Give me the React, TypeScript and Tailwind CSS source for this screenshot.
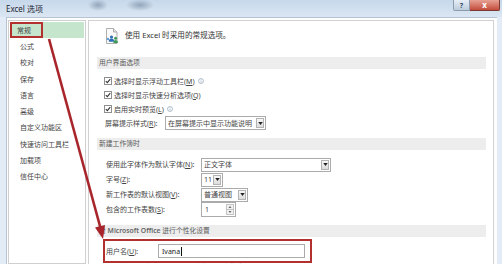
import React from "react"

type RowProps = {
  label: React.ReactNode
  labelClass: string
  children?: React.ReactNode
}

const Check = () => (
  <span className="flex h-[8px] w-[8px] shrink-0 items-center justify-center border border-[#8e8f8f] bg-white">
    <svg viewBox="0 0 8 8" className="h-[6px] w-[6px]">
      <path d="M1 4.3 L3.1 6.2 L7 1.4" fill="none" stroke="#333" strokeWidth="1.4" />
    </svg>
  </span>
)

const Info = () => (
  <svg viewBox="0 0 8 8" className="ml-[3px] h-[6px] w-[6px]">
    <circle cx="4" cy="4" r="3.3" fill="none" stroke="#8aa0b4" strokeWidth="0.9" />
    <path d="M4 3.4v2.6M4 2v0.6" stroke="#8aa0b4" strokeWidth="0.9" />
  </svg>
)

const DropBtn = () => (
  <span className="m-[1px] flex w-[8px] shrink-0 items-center justify-center border border-[#b3b3b3] bg-gradient-to-b from-[#f8f8f8] to-[#dcdcdc]">
    <svg viewBox="0 0 6 4" className="h-[3px] w-[5px]">
      <path d="M0 0h6L3 4z" fill="#222" />
    </svg>
  </span>
)

const Select = ({ text, className }: { text: string; className: string }) => (
  <div className={`flex h-[14px] border border-[#ababab] bg-white ${className}`}>
    <span className="flex flex-1 items-center overflow-hidden whitespace-nowrap pl-[2px]">{text}</span>
    <DropBtn />
  </div>
)

const Row = ({ label, labelClass, children }: RowProps) => (
  <div className="flex h-[15px] shrink-0 items-center">
    <span className={`shrink-0 whitespace-nowrap pl-[1px] ${labelClass}`}>{label}</span>
    {children}
  </div>
)

const Heading = ({ children, className }: { children: React.ReactNode; className: string }) => (
  <div className={`ml-[8px] mr-[7px] flex h-[12px] shrink-0 items-center bg-[#ededed] pl-[2px] text-[6.8px] text-[#5a5a5a] ${className}`}>
    {children}
  </div>
)

const GeneralIcon = () => (
  <svg viewBox="0 0 16 16" className="h-[16px] w-[16px]">
    <path d="M2.5 0.5h7l3.5 3.5v11.5h-10.5z" fill="#fafafa" stroke="#9a9a9a" strokeWidth="0.8" />
    <path d="M9.5 0.5v3.5h3.5" fill="#e4e4e4" stroke="#9a9a9a" strokeWidth="0.8" />
    <circle cx="7.5" cy="9" r="1.6" fill="#2f6fb5" />
    <path d="M4.8 13.8c0-2.2 1.2-3.2 2.7-3.2s2.7 1 2.7 3.2z" fill="#2f6fb5" />
    <circle cx="11.6" cy="10.2" r="1.5" fill="#3f9a5c" />
    <path d="M9.3 15c0-2 1-2.9 2.3-2.9s2.3 0.9 2.3 2.9z" fill="#3f9a5c" />
    <circle cx="4" cy="11" r="1.2" fill="#5b9bd5" />
  </svg>
)

const navItems = [
  "公式",
  "校对",
  "保存",
  "语言",
  "高级",
  "自定义功能区",
  "快速访问工具栏",
  "加载项",
  "信任中心"
]

export default function App() {
  return (
    <div className="relative h-[264px] w-[502px] overflow-hidden bg-[#e3ecf6] font-['Noto_Sans','Noto_Sans_CJK_SC',sans-serif] text-[7px] leading-none text-[#444]">
      {/* title bar */}
      <div className="flex h-[17px] items-start justify-between bg-[radial-gradient(ellipse_10px_6px_at_98px_5px,#93a6ba,transparent),radial-gradient(ellipse_14px_6px_at_140px_5px,#93a6ba,transparent),linear-gradient(to_bottom,#c6d8eb,#dbe6f2)]">
        <span className="pl-[6px] pt-[5px] text-[8px] text-[#1d2733]">Excel 选项</span>
        <div className="flex pr-[2px]">
          <span className="flex h-[11px] w-[17px] items-center justify-center rounded-bl-[2px] border border-t-0 border-[#8c9db0] bg-gradient-to-b from-[#e7eef6] to-[#bccbdb] text-[7px] font-bold text-[#33475c]">
            ?
          </span>
          <span className="flex h-[11px] w-[30px] items-center justify-center rounded-br-[2px] border border-t-0 border-l-0 border-[#7d3a33] bg-gradient-to-b from-[#e7a193] to-[#c24a3c] text-[8px] font-bold text-white">
            x
          </span>
        </div>
      </div>

      {/* client area */}
      <div className="flex h-[247px] pl-[6px] pr-[5px]">
        <div className="flex flex-1 border-l border-t border-[#b6c3d3] bg-[#fdfdfd] pl-[1px] pt-[2px]">
          {/* sidebar */}
          <div className="flex w-[78px] flex-col border border-[#cfcfcf] bg-white px-[1px] pt-[1px] text-[7px]">
            <div className="flex h-[16.3px] shrink-0 items-stretch bg-[#c6e5cd]">
              <span className="flex w-[33px] items-center border-2 border-[#b3302f] pl-[5px]">常规</span>
            </div>
            {navItems.map((item) => (
              <div key={item} className="flex h-[16.3px] shrink-0 items-center pl-[10px]">
                {item}
              </div>
            ))}
          </div>

          {/* content */}
          <div className="ml-[2px] flex w-[406px] flex-col border-l border-r border-t border-[#d2d2d2] bg-white pt-[1px]">
            <div className="mt-[6px] flex h-[16px] shrink-0 items-center pl-[15px]">
              <GeneralIcon />
              <span className="ml-[5px] text-[7.6px] text-[#333]">使用 Excel 时采用的常规选项。</span>
            </div>

            <Heading className="mt-[13px]">用户界面选项</Heading>

            <div className="mt-[5px] flex shrink-0 flex-col pl-[15px]">
              <div className="flex h-[14px] items-center">
                <Check />
                <span className="ml-[2px]">
                  选择时显示浮动工具栏(<u>M</u>)
                </span>
                <Info />
              </div>
              <div className="flex h-[14px] items-center">
                <Check />
                <span className="ml-[2px]">
                  选择时显示快速分析选项(<u>Q</u>)
                </span>
              </div>
              <div className="flex h-[14px] items-center">
                <Check />
                <span className="ml-[2px]">
                  启用实时预览(<u>L</u>)
                </span>
                <Info />
              </div>
              <div className="flex h-[14px] items-center">
                <span className="w-[61px] shrink-0 whitespace-nowrap pl-[1px]">
                  屏幕提示样式(<u>R</u>):
                </span>
                <Select text="在屏幕提示中显示功能说明" className="w-[101px]" />
              </div>
            </div>

            <Heading className="mt-[8px]">新建工作簿时</Heading>

            <div className="mt-[7px] flex shrink-0 flex-col pl-[16px]">
              <Row label={<>使用此字体作为默认字体(<u>N</u>):</>} labelClass="w-[96px]">
                <Select text="正文字体" className="w-[130px]" />
              </Row>
              <Row label={<>字号(<u>Z</u>):</>} labelClass="w-[96px]">
                <Select text="11" className="w-[22px]" />
              </Row>
              <Row label={<>新工作表的默认视图(<u>V</u>):</>} labelClass="w-[96px]">
                <Select text="普通视图" className="w-[47px]" />
              </Row>
              <Row label={<>包含的工作表数(<u>S</u>):</>} labelClass="w-[96px]">
                <div className="flex h-[15px] w-[35px] border border-[#ababab] bg-white">
                  <span className="flex flex-1 items-center pl-[3px]">1</span>
                  <span className="m-[1px] flex w-[8px] flex-col border border-[#c4c4c4] bg-[#f1f1f1]">
                    <span className="flex flex-1 items-center justify-center border-b border-[#c4c4c4]">
                      <svg viewBox="0 0 6 4" className="h-[2px] w-[4px]">
                        <path d="M0 4h6L3 0z" fill="#666" />
                      </svg>
                    </span>
                    <span className="flex flex-1 items-center justify-center">
                      <svg viewBox="0 0 6 4" className="h-[2px] w-[4px]">
                        <path d="M0 0h6L3 4z" fill="#666" />
                      </svg>
                    </span>
                  </span>
                </div>
              </Row>
            </div>

            <Heading className="mt-[8px]">
              对&nbsp;<span className="font-semibold text-[#666]">Microsoft Office</span>&nbsp;进行个性化设置
            </Heading>

            <div className="ml-[14px] mt-[2px] flex h-[24px] w-[209px] shrink-0 items-center border-2 border-[#b2302e]">
              <span className="w-[53px] shrink-0 whitespace-nowrap pl-[1px]">
                用户名(<u>U</u>):
              </span>
              <div className="flex h-[14px] w-[147px] items-center border border-[#ababab] bg-white pl-[3px] text-[#222]">
                Ivana
                <span className="ml-[1px] h-[9px] w-[1px] bg-[#111]" />
              </div>
            </div>

            <div className="mt-[1px] flex h-[14px] shrink-0 items-start pl-[16px] text-[#7a4545]">
              <Check />
              <span className="ml-[2px]">不管是否登录到 Office 都始终使用这些值(A)。</span>
            </div>
          </div>
        </div>
      </div>

      {/* red arrow annotation */}
      <svg className="pointer-events-none absolute left-0 top-0" width="502" height="264" viewBox="0 0 502 264">
        <line x1="49" y1="39" x2="100.5" y2="228" stroke="#a8262b" strokeWidth="2.6" />
        <polygon points="103,239 95,227.5 105,225" fill="#a8262b" />
      </svg>
    </div>
  )
}
